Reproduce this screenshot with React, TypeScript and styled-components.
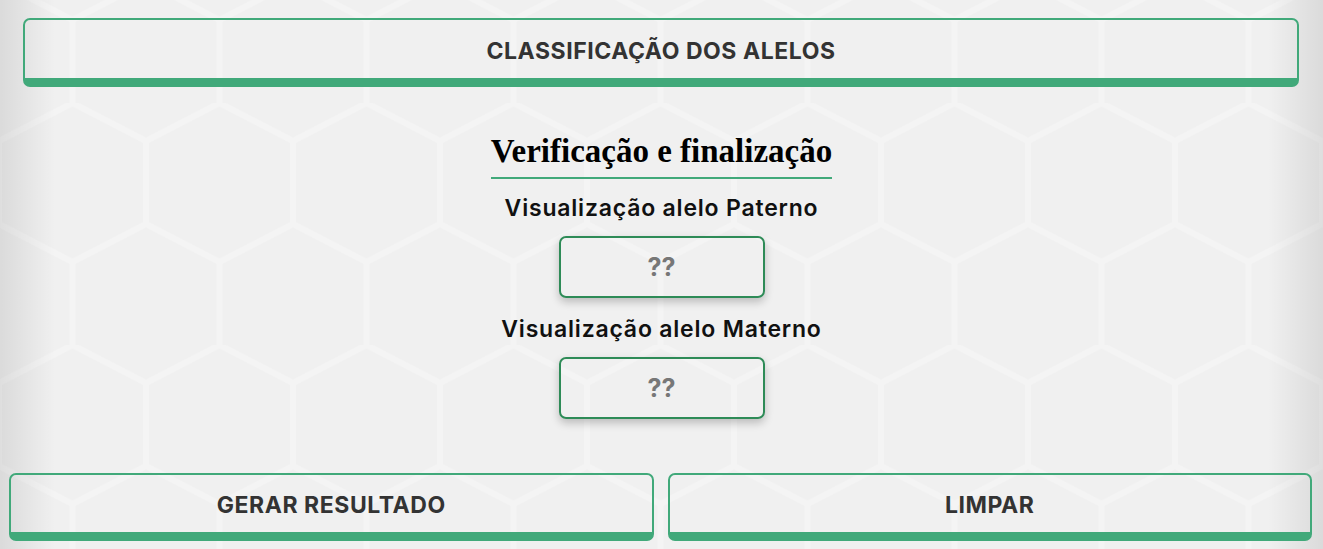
import React from "react";
import styled, { createGlobalStyle } from "styled-components";

const hexSvg = `<svg xmlns='http://www.w3.org/2000/svg' width='147' height='242' viewBox='0 0 147 242'><path d='M0 38 L73.5 0 L147 38 M0 38 V121 M147 38 V121 M0 121 L73.5 159 L147 121 M73.5 159 V242' fill='none' stroke='%23f4f4f4' stroke-width='6'/></svg>`;

const GlobalStyle = createGlobalStyle`
  html, body {
    margin: 0;
    padding: 0;
  }
  body {
    font-family: Inter, Roboto, "Liberation Sans", sans-serif;
    background: #f0f0f0;
  }
`;

const Page = styled.div`
  min-height: 549px;
  box-sizing: border-box;
  display: flex;
  flex-direction: column;
  background-color: #f0f0f0;
  background-image:
    linear-gradient(to right, rgba(0, 0, 0, 0.09), rgba(0, 0, 0, 0) 55px, rgba(0, 0, 0, 0) calc(100% - 55px), rgba(0, 0, 0, 0.09)),
    url("data:image/svg+xml,${hexSvg}");
  background-position: 0 0, -1px 103px;
  background-repeat: no-repeat, repeat;
  padding-bottom: 8px;
`;

const GreenButton = styled.button<{ $height?: number; $shift?: number }>`
  box-sizing: border-box;
  height: ${(p) => p.$height ?? 69}px;
  width: 100%;
  margin: 0;
  padding: ${(p) => p.$shift ?? 0}px 0 0;
  background: transparent;
  border: 2px solid #41a97a;
  border-bottom-width: 9px;
  border-radius: 7px;
  font-family: Inter, Roboto, "Liberation Sans", sans-serif;
  font-weight: 700;
  font-size: 23px;
  letter-spacing: 0.55px;
  color: #333333;
  display: flex;
  align-items: center;
  justify-content: center;
  cursor: pointer;
`;

const TopBar = styled.div`
  padding: 18px 24px 0 23px;
`;

const Section = styled.section`
  display: flex;
  flex-direction: column;
  align-items: center;
  margin-top: 46px;
`;

const Heading = styled.h2`
  margin: 0;
  font-family: "Liberation Serif", "Times New Roman", serif;
  font-weight: 700;
  font-size: 33px;
  line-height: 37px;
  color: #000;
  padding-bottom: 7px;
  border-bottom: 2px solid #41a97a;
`;

const Label = styled.h3<{ $top: number }>`
  margin: ${(p) => p.$top}px 0 0;
  font-family: Inter, Roboto, "Liberation Sans", sans-serif;
  font-weight: 600;
  font-size: 23px;
  letter-spacing: 0.8px;
  line-height: 26px;
  color: #111;
`;

const ValueBox = styled.div`
  box-sizing: border-box;
  margin-top: 15px;
  width: 206px;
  height: 62px;
  border: 2px solid #2e8b57;
  border-radius: 7px;
  box-shadow: 0 4px 9px rgba(0, 0, 0, 0.22);
  display: flex;
  align-items: center;
  justify-content: center;
  font-family: Inter, Roboto, "Liberation Sans", sans-serif;
  font-weight: 700;
  font-size: 25px;
  color: #777777;
`;

const Actions = styled.div`
  margin-top: 54px;
  padding: 0 11px 0 9px;
  display: grid;
  grid-template-columns: 1fr 1fr;
  column-gap: 14px;
`;

export default function App() {
  return (
    <>
      <GlobalStyle />
      <Page>
        <TopBar>
          <GreenButton $shift={3}>CLASSIFICAÇÃO DOS ALELOS</GreenButton>
        </TopBar>
        <Section>
          <Heading>Verificação e finalização</Heading>
          <Label $top={16}>Visualização alelo Paterno</Label>
          <ValueBox>??</ValueBox>
          <Label $top={18}>Visualização alelo Materno</Label>
          <ValueBox>??</ValueBox>
        </Section>
        <Actions>
          <GreenButton $height={68} $shift={3}>GERAR RESULTADO</GreenButton>
          <GreenButton $height={68} $shift={3}>LIMPAR</GreenButton>
        </Actions>
      </Page>
    </>
  );
}
